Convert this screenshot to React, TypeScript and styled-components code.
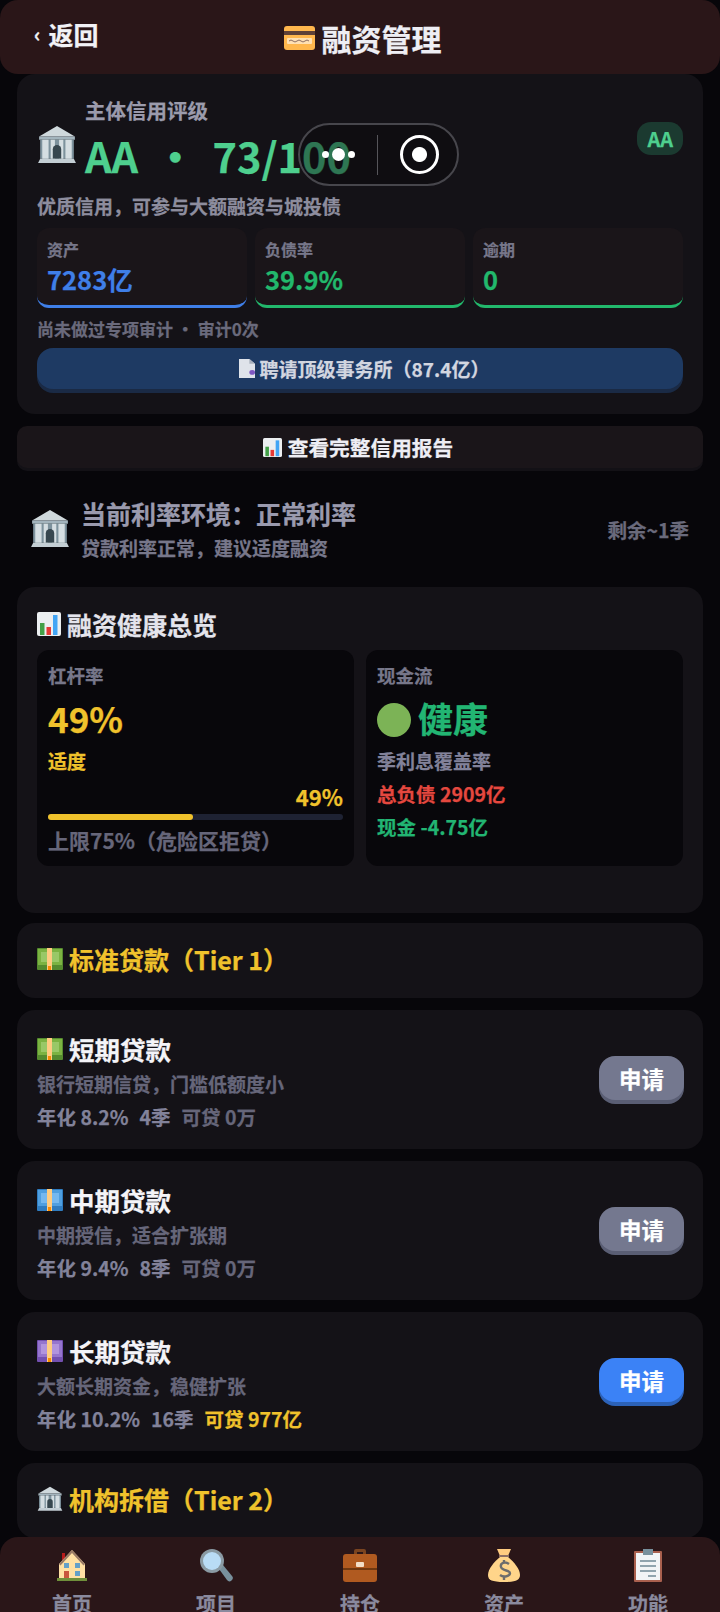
import styled, { createGlobalStyle } from "styled-components";

const GlobalStyle = createGlobalStyle`
	html, body {
		margin: 0;
		padding: 0;
		background: #07060a;
	}
	* {
		box-sizing: border-box;
	}
	body {
		font-family: "Noto Sans CJK SC", "Noto Sans", sans-serif;
		font-weight: 700;
		-webkit-text-stroke: 0.25px currentColor;
	}
`;

const Page = styled.div`
	position: relative;
	width: 720px;
	height: 1612px;
	display: flex;
	flex-direction: column;
	overflow: hidden;
	background: #07060a;
`;

const Header = styled.header`
	position: relative;
	z-index: 2;
	flex: none;
	height: 74px;
	display: grid;
	grid-template-columns: 1fr auto 1fr;
	padding: 0 29px 0 34px;
	background: #2a1618;
	border-radius: 18px;
`;

const BackLink = styled.div`
	display: flex;
	align-items: center;
	gap: 8px;
	height: 68px;
	color: #f2f2f6;
	font-size: 25px;
	line-height: 1;
`;

const Chevron = styled.span`
	font-size: 20px;
	font-weight: 700;
`;

const PageTitle = styled.h1`
	display: flex;
	align-items: center;
	gap: 7px;
	height: 75px;
	margin: 0;
	color: #eeeef4;
	font-size: 30px;
	line-height: 1;
`;

const Capsule = styled.div`
	position: absolute;
	z-index: 3;
	top: 123px;
	left: 298px;
	width: 161px;
	height: 63px;
	display: flex;
	align-items: center;
	border: 2px solid #47464c;
	border-radius: 32px;
	background: rgba(8, 8, 12, 0.45);
`;

const CapsuleDots = styled.div`
	flex: 1;
	display: flex;
	align-items: center;
	justify-content: center;
	gap: 3px;
	height: 100%;
`;

const Dot = styled.i<{ $size: number }>`
	display: block;
	width: ${(p) => p.$size}px;
	height: ${(p) => p.$size}px;
	border-radius: 50%;
	background: #fff;
`;

const CapsuleDivider = styled.div`
	width: 1px;
	height: 40px;
	margin-left: 1px;
	background: #56555a;
`;

const CapsuleRing = styled.div`
	flex: 1;
	display: flex;
	align-items: center;
	justify-content: center;
	padding-left: 3px;

	&::before {
		content: "";
		width: 33px;
		height: 33px;
		border: 3px solid #fff;
		border-radius: 50%;
		background: radial-gradient(circle, #fff 0 7px, transparent 8px);
	}
`;

const Main = styled.main`
	flex: 1;
	min-height: 0;
	display: flex;
	flex-direction: column;
	gap: 12px;
	padding: 0 17px;
	overflow: hidden;
`;

const Card = styled.section`
	flex: none;
	border-radius: 18px;
	background: #141217;
`;

const CreditCard = styled(Card)`
	padding: 20px 20px 21px;
`;

const CreditHead = styled.div`
	display: flex;
	align-items: center;
	gap: 8px;
`;

const CreditBank = styled.div`
	display: flex;
	margin-top: 12px;
`;

const CreditText = styled.div`
	flex: 1;
`;

const CreditLabel = styled.div`
	color: #9b9bac;
	font-size: 20.5px;
	line-height: 32px;
`;

const CreditScore = styled.div`
	color: #4ecf8e;
	font-size: 41.5px;
	line-height: 58px;
	word-spacing: 7px;
	white-space: nowrap;
`;

const GradeBadge = styled.span`
	align-self: flex-start;
	margin-top: 28px;
	padding: 0 10px;
	height: 33px;
	border-radius: 14px;
	background: #1b3a30;
	color: #4ecf8e;
	font-size: 20px;
	line-height: 33px;
`;

const CreditNote = styled.div`
	margin-top: 7px;
	color: #8d8d9e;
	font-size: 19px;
	line-height: 30px;
`;

const StatGrid = styled.div`
	display: grid;
	grid-template-columns: repeat(3, 1fr);
	gap: 8px;
	margin-top: 7px;
`;

const StatBox = styled.div<{ $accent: string }>`
	height: 80px;
	padding: 9px 10px 0;
	border-radius: 12px;
	border-bottom: 3px solid ${(p) => p.$accent};
	background: #1a1519;
	color: ${(p) => p.$accent};
`;

const StatLabel = styled.div`
	color: #77778a;
	font-size: 16px;
	line-height: 24px;
`;

const StatValue = styled.div`
	font-size: 25.5px;
	line-height: 36px;
`;

const AuditNote = styled.div`
	margin-top: 10px;
	color: #6a6a7c;
	font-size: 17px;
	line-height: 22px;
`;

const FullButton = styled.div`
	display: flex;
	align-items: center;
	justify-content: center;
	gap: 5px;
	height: 41px;
	margin-top: 8px;
	margin-bottom: 4px;
	padding-left: 8px;
	border-radius: 16px;
	background: #1e3a63;
	box-shadow: 0 4px 0 #1a2a45;
	color: #d2d6e0;
	font-size: 19px;
`;

const ReportButton = styled.div`
	flex: none;
	display: flex;
	align-items: center;
	justify-content: center;
	gap: 6px;
	height: 42px;
	margin-bottom: 2px;
	padding-right: 4px;
	border-radius: 10px;
	background: #1a1519;
	box-shadow: 0 3px 0 #131116;
	color: #eeeef4;
	font-size: 20.7px;
`;

const RateRow = styled.div`
	flex: none;
	display: flex;
	align-items: center;
	gap: 11px;
	height: 95px;
	padding: 0 14px 1px 13px;
	margin-bottom: -2px;
`;

const RateText = styled.div`
	flex: 1;
`;

const RateTitle = styled.div`
	margin-bottom: 2px;
	color: #9a9aae;
	font-size: 25px;
	line-height: 36px;
`;

const RateDesc = styled.div`
	color: #77778a;
	font-size: 19px;
	line-height: 30px;
`;

const RateRemain = styled.div`
	color: #6a6a7c;
	font-size: 19.5px;
`;

const HealthCard = styled(Card)`
	height: 326px;
	margin-bottom: -2px;
	padding: 19px 20px 0;
`;

const SectionTitle = styled.h2<{ $gold?: boolean }>`
	display: flex;
	align-items: center;
	gap: 6px;
	margin: 0;
	color: ${(p) => (p.$gold ? "#f0c22c" : "#e4e4ec")};
	font-size: 25px;
	line-height: 36px;
`;

const HealthGrid = styled.div`
	display: grid;
	grid-template-columns: 1fr 1fr;
	gap: 12px;
	margin-top: 8px;
`;

const HealthPanel = styled.div`
	height: 216px;
	padding: 11px 11px 0;
	border-radius: 12px;
	background: #08070b;
`;

const PanelLabel = styled.div`
	color: #77778a;
	font-size: 18.5px;
	line-height: 28px;
`;

const BigValue = styled.div<{ $color: string }>`
	display: flex;
	align-items: center;
	gap: 7px;
	margin-top: 4px;
	margin-bottom: 1px;
	height: 50px;
	color: ${(p) => p.$color};
	font-size: 35px;
	line-height: 50px;
`;

const GreenDot = styled.span`
	width: 34px;
	height: 34px;
	margin-top: 3px;
	border-radius: 50%;
	background: #7cb356;
`;

const PanelLine = styled.div<{ $color: string; $size?: number }>`
	color: ${(p) => p.$color};
	font-size: ${(p) => p.$size ?? 19.5}px;
	line-height: 33px;
`;

const BarValue = styled.div`
	margin-top: 5px;
	text-align: right;
	color: #f0c22c;
	font-size: 22px;
	line-height: 28px;
`;

const BarTrack = styled.div`
	height: 6px;
	margin-top: 4px;
	border-radius: 3px;
	background: #1e2233;
`;

const BarFill = styled.div`
	height: 100%;
	border-radius: 3px;
	background: #f0c22c;
`;

const BarNote = styled.div`
	margin-top: 5px;
	color: #66667a;
	font-size: 21px;
	line-height: 30px;
	white-space: nowrap;
`;

const TierCard = styled(Card)`
	display: flex;
	align-items: center;
	height: 75px;
	padding: 0 20px 4px;
`;

const LoanCard = styled(Card)`
	display: flex;
	align-items: center;
	justify-content: space-between;
	height: 139px;
	padding: 2px 19px 0 20px;
`;

const LoanName = styled.div`
	display: flex;
	align-items: center;
	gap: 6px;
	margin-bottom: 2px;
	color: #f4f4f8;
	font-size: 25.5px;
	line-height: 36px;
`;

const LoanDesc = styled.div`
	color: #66667a;
	font-size: 19px;
	line-height: 30px;
`;

const LoanMeta = styled.div`
	display: flex;
	gap: 11px;
	margin-top: 4px;
	color: #82829a;
	font-size: 19.5px;
	line-height: 28px;
`;

const LoanLimit = styled.span<{ $available: boolean }>`
	color: ${(p) => (p.$available ? "#f0c22c" : "#66667a")};
`;

const ApplyButton = styled.div<{ $active: boolean }>`
	width: 85px;
	height: 44px;
	margin-top: -6px;
	border-radius: 16px;
	background: ${(p) => (p.$active ? "#3b82f6" : "#74788f")};
	box-shadow: 0 4px 0 ${(p) => (p.$active ? "#2c62b8" : "#5a5e74")};
	color: #fff;
	font-size: 22.5px;
	line-height: 44px;
	text-align: center;
`;

const BottomNav = styled.nav`
	position: relative;
	z-index: 2;
	flex: none;
	height: 75px;
	display: grid;
	grid-template-columns: repeat(5, 1fr);
	overflow: hidden;
	background: #2a1618;
	border-radius: 18px 18px 0 0;
`;

const NavItem = styled.div`
	display: flex;
	flex-direction: column;
	align-items: center;
	gap: 8px;
	padding-top: 11px;
	color: #8a8a9e;
	font-size: 20px;
	line-height: 28px;
`;

type IconProps = { size?: number };

const BankIcon = ({ size = 40 }: IconProps) => (
	<svg width={size} height={size} viewBox="0 0 38 38">
		<path d="M19 1 36 11H2z" fill="#cfd8dc" />
		<path d="M2 11h34v3H2z" fill="#a3b4bd" />
		<path d="M3 14h32v18H3z" fill="#7d929d" />
		<path d="M5 14h6v18H5zM13 14h4v18h-4zM21 14h4v18h-4zM27 14h6v18h-6z" fill="#d5dee2" />
		<path d="M15 32V23a4 4 0 0 1 8 0v9z" fill="#37474f" />
		<path d="M3 32h32l2 4H1z" fill="#c3ced4" />
	</svg>
);

const CardIcon = () => (
	<svg width="31" height="24" viewBox="0 0 31 24">
		<rect width="31" height="24" rx="3" fill="#ffb74d" />
		<rect y="5" width="31" height="4" fill="#5d4037" />
		<rect x="3" y="12" width="25" height="6" rx="1" fill="#ffe0b2" />
		<path d="M5 15q2-2 4 0t4 0 4 0 4 0 4 0" stroke="#8d6e63" strokeWidth="1" fill="none" />
	</svg>
);

const ChartIcon = ({ size = 24 }: IconProps) => (
	<svg width={size} height={size} viewBox="0 0 24 24">
		<rect width="24" height="24" rx="2" fill="#eceff1" />
		<rect x="3" y="11" width="4.5" height="12" fill="#43a047" />
		<rect x="9.5" y="15" width="4.5" height="8" fill="#e53935" />
		<rect x="16" y="3" width="4.5" height="20" fill="#42a5f5" />
	</svg>
);

const DocIcon = () => (
	<svg width="16" height="19" viewBox="0 0 17 24" preserveAspectRatio="none">
		<path d="M0 0h11l6 6v18H0z" fill="#dfe3ea" />
		<path d="M11 0l6 6h-6z" fill="#a8b0bd" />
		<circle cx="14" cy="17" r="3" fill="#7e57c2" />
	</svg>
);

const cashColors = {
	green: ["#7cb342", "#aed581", "#558b2f"],
	blue: ["#4f9fe0", "#90caf9", "#2f7cc0"],
	purple: ["#9575cd", "#c5a8e8", "#7350b0"],
};

const CashIcon = ({ tone }: { tone: keyof typeof cashColors }) => {
	const [base, light, dark] = cashColors[tone];
	return (
		<svg width="26" height="22" viewBox="0 0 26 22">
			<rect width="26" height="22" rx="1" fill={dark} />
			<rect x="1" y="1" width="24" height="16" fill={base} />
			<rect x="4" y="4" width="18" height="10" fill={light} opacity="0.6" />
			<rect x="10" width="5" height="22" fill="#ffcc80" />
			<rect x="11" y="18" width="3" height="4" fill="#fb8c00" />
		</svg>
	);
};

const HouseIcon = () => (
	<svg width="34" height="34" viewBox="0 0 34 34">
		<path d="M7 5h3v7H7z" fill="#b71c1c" />
		<path d="M17 2 30 16v14H4V16z" fill="#ffe0a3" />
		<path d="M17 2 30 16l-1.500 1.500L17 5 5.500 17.500 4 16z" fill="#9a7b66" />
		<rect x="9" y="15" width="5" height="5" fill="#64a0c8" />
		<rect x="20" y="15" width="5" height="5" fill="#64a0c8" />
		<rect x="20" y="23" width="5" height="5" fill="#64a0c8" />
		<rect x="9" y="23" width="5" height="7" fill="#c8553d" />
		<rect x="2" y="30" width="30" height="3" fill="#6f8f3a" />
	</svg>
);

const SearchIcon = () => (
	<svg width="34" height="34" viewBox="0 0 34 34">
		<path d="M20 21l4-4 9 11a3 3 0 0 1-5 4z" fill="#78909c" />
		<circle cx="13" cy="13" r="12" fill="#8a9aa3" />
		<circle cx="13" cy="13" r="9" fill="#b9dcf5" />
	</svg>
);

const CaseIcon = () => (
	<svg width="34" height="34" viewBox="0 0 34 34">
		<path d="M11 7V3a2 2 0 0 1 2-2h8a2 2 0 0 1 2 2v4h-3V4h-6v3z" fill="#7a4420" />
		<rect y="6" width="34" height="28" rx="3" fill="#b05a20" />
		<rect y="20" width="34" height="2" fill="#6f3810" />
		<rect x="13" y="14" width="8" height="5" rx="1" fill="#f3dfc8" />
	</svg>
);

const BagIcon = () => (
	<svg width="32" height="34" viewBox="0 0 32 34">
		<path d="M9 1h14l-3 7h-8z" fill="#ffcc80" />
		<rect x="11" y="7" width="10" height="2" fill="#8d6e63" />
		<path d="M12 9h8c6 5 12 12 12 18 0 5-4 7-16 7S0 32 0 27C0 21 6 14 12 9z" fill="#ffd58a" />
		<path d="M21 16c-4-3-9-1-8 3s9 3 9 6-6 5-10 2M16 12v3M16 29v3" stroke="#6d6d6d" strokeWidth="2.4" fill="none" />
	</svg>
);

const ClipIcon = () => (
	<svg width="28" height="34" viewBox="0 0 28 34">
		<rect y="3" width="28" height="31" rx="1" fill="#a9604e" />
		<rect x="2" y="5" width="24" height="27" fill="#f1f4f6" />
		<path d="M9 1h10v6H9z" fill="#78909c" />
		<path d="M6 12h16v2H6zM6 17h16v2H6zM6 22h16v2H6zM14 27h8v2h-8z" fill="#90a4ae" />
	</svg>
);

const stats = [
	{ label: "资产", value: "7283亿", accent: "#3f7fe8" },
	{ label: "负债率", value: "39.9%", accent: "#22b86c" },
	{ label: "逾期", value: "0", accent: "#22b86c" },
];

const loans = [
	{ tone: "green" as const, name: "短期贷款", desc: "银行短期信贷，门槛低额度小", rate: "年化 8.2%", term: "4季", limit: "可贷 0万", available: false },
	{ tone: "blue" as const, name: "中期贷款", desc: "中期授信，适合扩张期", rate: "年化 9.4%", term: "8季", limit: "可贷 0万", available: false },
	{ tone: "purple" as const, name: "长期贷款", desc: "大额长期资金，稳健扩张", rate: "年化 10.2%", term: "16季", limit: "可贷 977亿", available: true },
];

const navItems = [
	{ label: "首页", icon: <HouseIcon /> },
	{ label: "项目", icon: <SearchIcon /> },
	{ label: "持仓", icon: <CaseIcon /> },
	{ label: "资产", icon: <BagIcon /> },
	{ label: "功能", icon: <ClipIcon /> },
];

export default function App() {
	return (
		<Page>
			<GlobalStyle />
			<Header>
				<BackLink>
					<Chevron>‹</Chevron>
					返回
				</BackLink>
				<PageTitle>
					<CardIcon />
					融资管理
				</PageTitle>
			</Header>

			<Capsule>
				<CapsuleDots>
					<Dot $size={7} />
					<Dot $size={13} />
					<Dot $size={7} />
				</CapsuleDots>
				<CapsuleDivider />
				<CapsuleRing />
			</Capsule>

			<Main>
				<CreditCard>
					<CreditHead>
						<CreditBank>
							<BankIcon />
						</CreditBank>
						<CreditText>
							<CreditLabel>主体信用评级</CreditLabel>
							<CreditScore>AA · 73/100</CreditScore>
						</CreditText>
						<GradeBadge>AA</GradeBadge>
					</CreditHead>
					<CreditNote>优质信用，可参与大额融资与城投债</CreditNote>
					<StatGrid>
						{stats.map((stat) => (
							<StatBox key={stat.label} $accent={stat.accent}>
								<StatLabel>{stat.label}</StatLabel>
								<StatValue>{stat.value}</StatValue>
							</StatBox>
						))}
					</StatGrid>
					<AuditNote>尚未做过专项审计 · 审计0次</AuditNote>
					<FullButton>
						<DocIcon />
						聘请顶级事务所（87.4亿）
					</FullButton>
				</CreditCard>

				<ReportButton>
					<ChartIcon size={19} />
					查看完整信用报告
				</ReportButton>

				<RateRow>
					<BankIcon />
					<RateText>
						<RateTitle>当前利率环境：正常利率</RateTitle>
						<RateDesc>贷款利率正常，建议适度融资</RateDesc>
					</RateText>
					<RateRemain>剩余~1季</RateRemain>
				</RateRow>

				<HealthCard>
					<SectionTitle>
						<ChartIcon />
						融资健康总览
					</SectionTitle>
					<HealthGrid>
						<HealthPanel>
							<PanelLabel>杠杆率</PanelLabel>
							<BigValue $color="#f0c22c">49%</BigValue>
							<PanelLine $color="#f0c22c" $size={19}>适度</PanelLine>
							<BarValue>49%</BarValue>
							<BarTrack>
								<BarFill style={{ width: "49%" }} />
							</BarTrack>
							<BarNote>上限75%（危险区拒贷）</BarNote>
						</HealthPanel>
						<HealthPanel>
							<PanelLabel>现金流</PanelLabel>
							<BigValue $color="#22b573">
								<GreenDot />
								健康
							</BigValue>
							<PanelLine $color="#82829a" $size={19}>季利息覆盖率</PanelLine>
							<PanelLine $color="#e5483f">总负债 2909亿</PanelLine>
							<PanelLine $color="#22b573">现金 -4.75亿</PanelLine>
						</HealthPanel>
					</HealthGrid>
				</HealthCard>

				<TierCard>
					<SectionTitle $gold>
						<CashIcon tone="green" />
						标准贷款（Tier 1）
					</SectionTitle>
				</TierCard>

				{loans.map((loan) => (
					<LoanCard key={loan.name}>
						<div>
							<LoanName>
								<CashIcon tone={loan.tone} />
								{loan.name}
							</LoanName>
							<LoanDesc>{loan.desc}</LoanDesc>
							<LoanMeta>
								<span>{loan.rate}</span>
								<span>{loan.term}</span>
								<LoanLimit $available={loan.available}>{loan.limit}</LoanLimit>
							</LoanMeta>
						</div>
						<ApplyButton $active={loan.available}>申请</ApplyButton>
					</LoanCard>
				))}

				<TierCard>
					<SectionTitle $gold>
						<BankIcon size={26} />
						机构拆借（Tier 2）
					</SectionTitle>
				</TierCard>
			</Main>

			<BottomNav>
				{navItems.map((item) => (
					<NavItem key={item.label}>
						{item.icon}
						{item.label}
					</NavItem>
				))}
			</BottomNav>
		</Page>
	);
}
